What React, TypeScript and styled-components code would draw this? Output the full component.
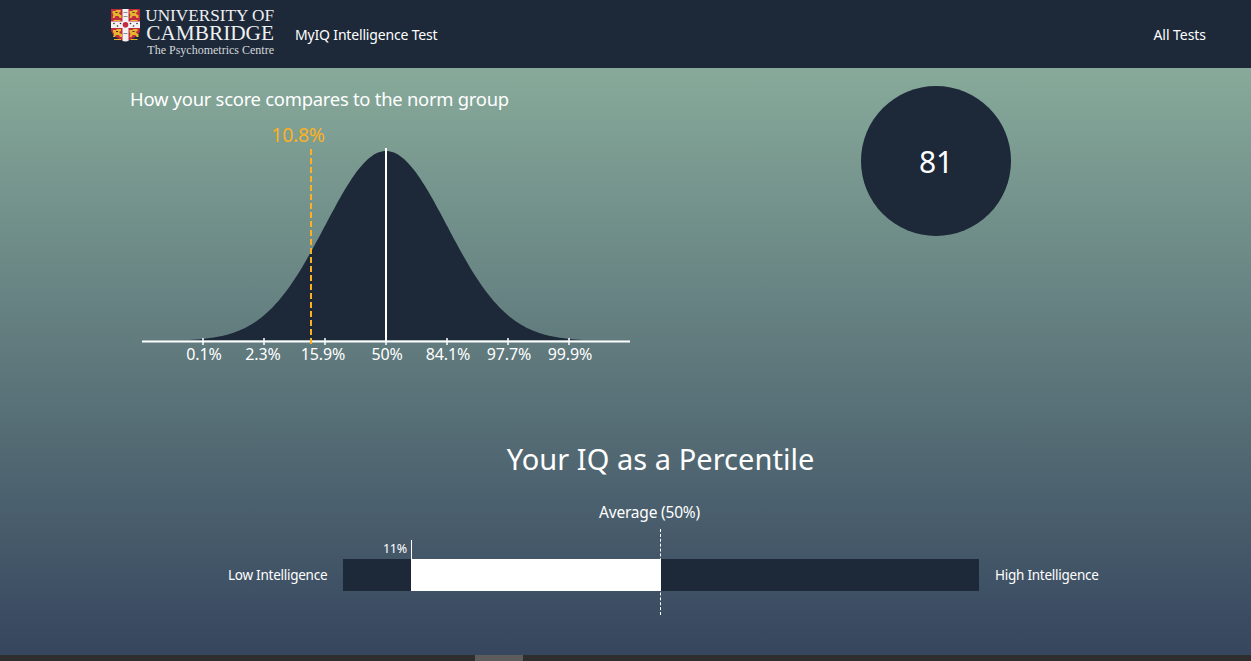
import { createGlobalStyle, styled } from "styled-components";

const navy = "#1d2939";
const font = `"Noto Sans", "Open Sans", sans-serif`;
const serif = `"Liberation Serif", serif`;

const CENTER = 386;
const SIGMA = 61;
const TOP = 151;
const BASE = 341;
const LEFT = 142;

const bellPath = () => {
    const pts: string[] = [];
    for (let x = 190; x <= 582; x += 2) {
        const z = (x - CENTER) / SIGMA;
        const y = BASE - (BASE - TOP) * Math.exp(-(z * z) / 2);
        pts.push(`${x - LEFT},${(y - 124).toFixed(1)}`);
    }
    return `M${pts.join("L")}Z`;
};

const ticks = [
    { x: 203, label: "0.1%", labelX: 204 },
    { x: 264, label: "2.3%", labelX: 263 },
    { x: 325, label: "15.9%", labelX: 323 },
    { x: 386, label: "50%", labelX: 387 },
    { x: 447, label: "84.1%", labelX: 448 },
    { x: 508, label: "97.7%", labelX: 509 },
    { x: 569, label: "99.9%", labelX: 570 },
];

const Bell = () => (
    <ChartSvg width="490" height="242" viewBox="0 0 490 242">
        <path d={bellPath()} fill={navy} />
        <line x1="0" x2="488" y1="217.5" y2="217.5" stroke="#fff" strokeWidth="2" />
        {ticks.map((t) => (
            <g key={t.label}>
                <line x1={t.x - LEFT} x2={t.x - LEFT} y1="214" y2="221" stroke="#fff" strokeWidth="1.5" />
                <TickLabel x={t.labelX - LEFT} y="236" textAnchor="middle">
                    {t.label}
                </TickLabel>
            </g>
        ))}
        <line x1={CENTER - LEFT} x2={CENTER - LEFT} y1="24" y2="217" stroke="#fff" strokeWidth="2" />
        <line x1="169" x2="169" y1="25" y2="222" stroke="#fdb022" strokeWidth="2" strokeDasharray="6 3" />
        <ScoreLabel x="156" y="18" textAnchor="middle">
            10.8%
        </ScoreLabel>
    </ChartSvg>
);

// simple rampant lion, used in each gold quarter of the shield
const Lion = ({ x, y }: { x: number; y: number }) => (
    <g transform={`translate(${x} ${y})`}>
        <path d="M0 1H3L4 0H8V2L6 3L8 5H9V8H7L6 6H3L2 8H0L1 5L0 3Z" fill="#e3b62c" />
        <path d="M1 10H8V11H1Z" fill="#e3b62c" />
        <path d="M3 2H5V3H3Z" fill="#5a1f24" />
    </g>
);

const Crest = () => (
    <CrestSvg width="30" height="33" viewBox="0 0 30 33">
        <path d="M0 0H29V20C29 26 22 30 14.500 32.500C7 30 0 26 0 20Z" fill="#c22a40" />
        <path d="M11.500 0H17.500V12.500H29V19H17.500V32L14.500 32.500L11.500 32V19H0V12.500H11.500Z" fill="#f2f2f2" />
        <Lion x={1.5} y={1} />
        <Lion x={18.5} y={1} />
        <Lion x={2} y={20} />
        <Lion x={18.5} y={20} />
        <path d="M12.500 3H16.500V4H12.500ZM12.500 7H16.500V8H12.500ZM12.500 24H16.500V25H12.500Z" fill="#8b8f94" />
        <circle cx="14.500" cy="15.700" r="2.800" fill="#c22a40" />
        <g fill="#2c2c2c">
            <circle cx="3" cy="14.500" r="0.800" />
            <circle cx="6.500" cy="17" r="0.800" />
            <circle cx="9.500" cy="14.500" r="0.800" />
            <circle cx="19.500" cy="14.500" r="0.800" />
            <circle cx="22.500" cy="17" r="0.800" />
            <circle cx="26" cy="14.500" r="0.800" />
        </g>
    </CrestSvg>
);

export default function App() {
    return (
        <Page>
            <GlobalStyle />
            <Header>
                <Brand>
                    <Crest />
                    <Wordmark>
                        <University>UNIVERSITY OF</University>
                        <Cambridge>CAMBRIDGE</Cambridge>
                        <Centre>The Psychometrics Centre</Centre>
                    </Wordmark>
                </Brand>
                <NavTitle>MyIQ Intelligence Test</NavTitle>
                <NavLink>All Tests</NavLink>
            </Header>
            <Main>
                <TopRow>
                    <ChartColumn>
                        <ChartTitle>How your score compares to the norm group</ChartTitle>
                        <Bell />
                    </ChartColumn>
                    <ScoreCircle>81</ScoreCircle>
                </TopRow>
                <PercentileTitle>Your IQ as a Percentile</PercentileTitle>
                <AverageLabel>Average (50%)</AverageLabel>
                <BarRow>
                    <EndLabel>Low Intelligence</EndLabel>
                    <Track>
                        <Fill />
                        <YouMarker>11%</YouMarker>
                        <AverageLine />
                    </Track>
                    <EndLabel>High Intelligence</EndLabel>
                </BarRow>
            </Main>
            <Scrollbar>
                <Thumb />
            </Scrollbar>
        </Page>
    );
}

const GlobalStyle = createGlobalStyle`
    html, body {
        margin: 0;
        padding: 0;
        height: 100%;
        overflow: hidden;
    }
    body {
        font-family: ${font};
        color: #fff;
    }
`;
const Page = styled.div`
    width: 1251px;
    height: 661px;
    display: flex;
    flex-direction: column;
`;
const Header = styled.header`
    height: 68px;
    flex: none;
    background: ${navy};
    display: flex;
    align-items: center;
    padding: 0 45px 0 111px;
`;
const Brand = styled.div`
    display: flex;
    align-items: flex-start;
    width: 163px;
    justify-content: space-between;
    margin-top: -3px;
`;
const CrestSvg = styled.svg`
    flex: none;
    margin-top: 1px;
`;
const Wordmark = styled.div`
    display: flex;
    flex-direction: column;
    align-items: flex-end;
    font-family: ${serif};
    color: #eef0f2;
`;
const University = styled.div`
    font-size: 17.200px;
    line-height: 16px;
    white-space: nowrap;
`;
const Cambridge = styled.div`
    font-size: 21.300px;
    line-height: 19px;
    white-space: nowrap;
`;
const Centre = styled.div`
    font-size: 12px;
    line-height: 14px;
    white-space: nowrap;
    color: #d5d8dc;
`;
const NavTitle = styled.div`
    margin-left: 21px;
    font-size: 14px;
    letter-spacing: -0.17px;
    white-space: nowrap;
`;
const NavLink = styled.div`
    margin-left: auto;
    font-size: 14px;
    letter-spacing: -0.05px;
`;
const Main = styled.main`
    flex: 1;
    display: flex;
    flex-direction: column;
    background: linear-gradient(#87aa9a, #36465e);
`;
const TopRow = styled.div`
    display: flex;
    justify-content: space-between;
    height: 303px;
    padding: 18px 240px 0 130px;
`;
const ChartColumn = styled.div`
    display: flex;
    flex-direction: column;
`;
const ChartTitle = styled.div`
    font-size: 18.400px;
    line-height: 25px;
    letter-spacing: -0.25px;
    white-space: nowrap;
`;
const ChartSvg = styled.svg`
    display: block;
    margin: 13px 0 0 12px;
    overflow: visible;
`;
const TickLabel = styled.text`
    font-family: ${font};
    font-size: 16px;
    letter-spacing: -0.15px;
    fill: #fff;
`;
const ScoreLabel = styled.text`
    font-family: ${font};
    font-size: 19.500px;
    letter-spacing: -0.3px;
    fill: #fdb022;
`;
const ScoreCircle = styled.div`
    width: 150px;
    height: 150px;
    border-radius: 50%;
    background: ${navy};
    display: flex;
    align-items: center;
    justify-content: center;
    font-size: 30px;
    letter-spacing: -0.1px;
`;
const PercentileTitle = styled.h2`
    margin: 48px 0 0 70px;
    text-align: center;
    font-size: 29px;
    line-height: 44px;
    font-weight: 400;
    letter-spacing: 0.04px;
`;
const AverageLabel = styled.div`
    margin: 20px 0 0 48px;
    text-align: center;
    font-size: 15.500px;
    line-height: 22px;
    letter-spacing: -0.2px;
`;
const BarRow = styled.div`
    display: flex;
    align-items: center;
    margin-top: 36px;
    padding-left: 228px;
    gap: 16px;
`;
const EndLabel = styled.div`
    width: 99px;
    font-size: 13.500px;
    letter-spacing: -0.25px;
    white-space: nowrap;
`;
const Track = styled.div`
    position: relative;
    width: 636px;
    height: 32px;
    background: ${navy};
`;
const Fill = styled.div`
    position: absolute;
    left: 68px;
    top: 0;
    bottom: 0;
    width: 250px;
    background: #fff;
`;
const YouMarker = styled.div`
    position: absolute;
    right: 567px;
    top: -19px;
    height: 19px;
    padding-right: 4px;
    border-right: 1px solid #fff;
    font-size: 12.500px;
    line-height: 18px;
    letter-spacing: -0.2px;
`;
const AverageLine = styled.div`
    position: absolute;
    left: 317px;
    top: -30px;
    height: 86px;
    border-left: 1px dashed #fff;
`;
const Scrollbar = styled.div`
    height: 6px;
    flex: none;
    background: #2e2e2e;
    padding-left: 475px;
`;
const Thumb = styled.div`
    width: 48px;
    height: 6px;
    background: #5c5c5c;
`;
